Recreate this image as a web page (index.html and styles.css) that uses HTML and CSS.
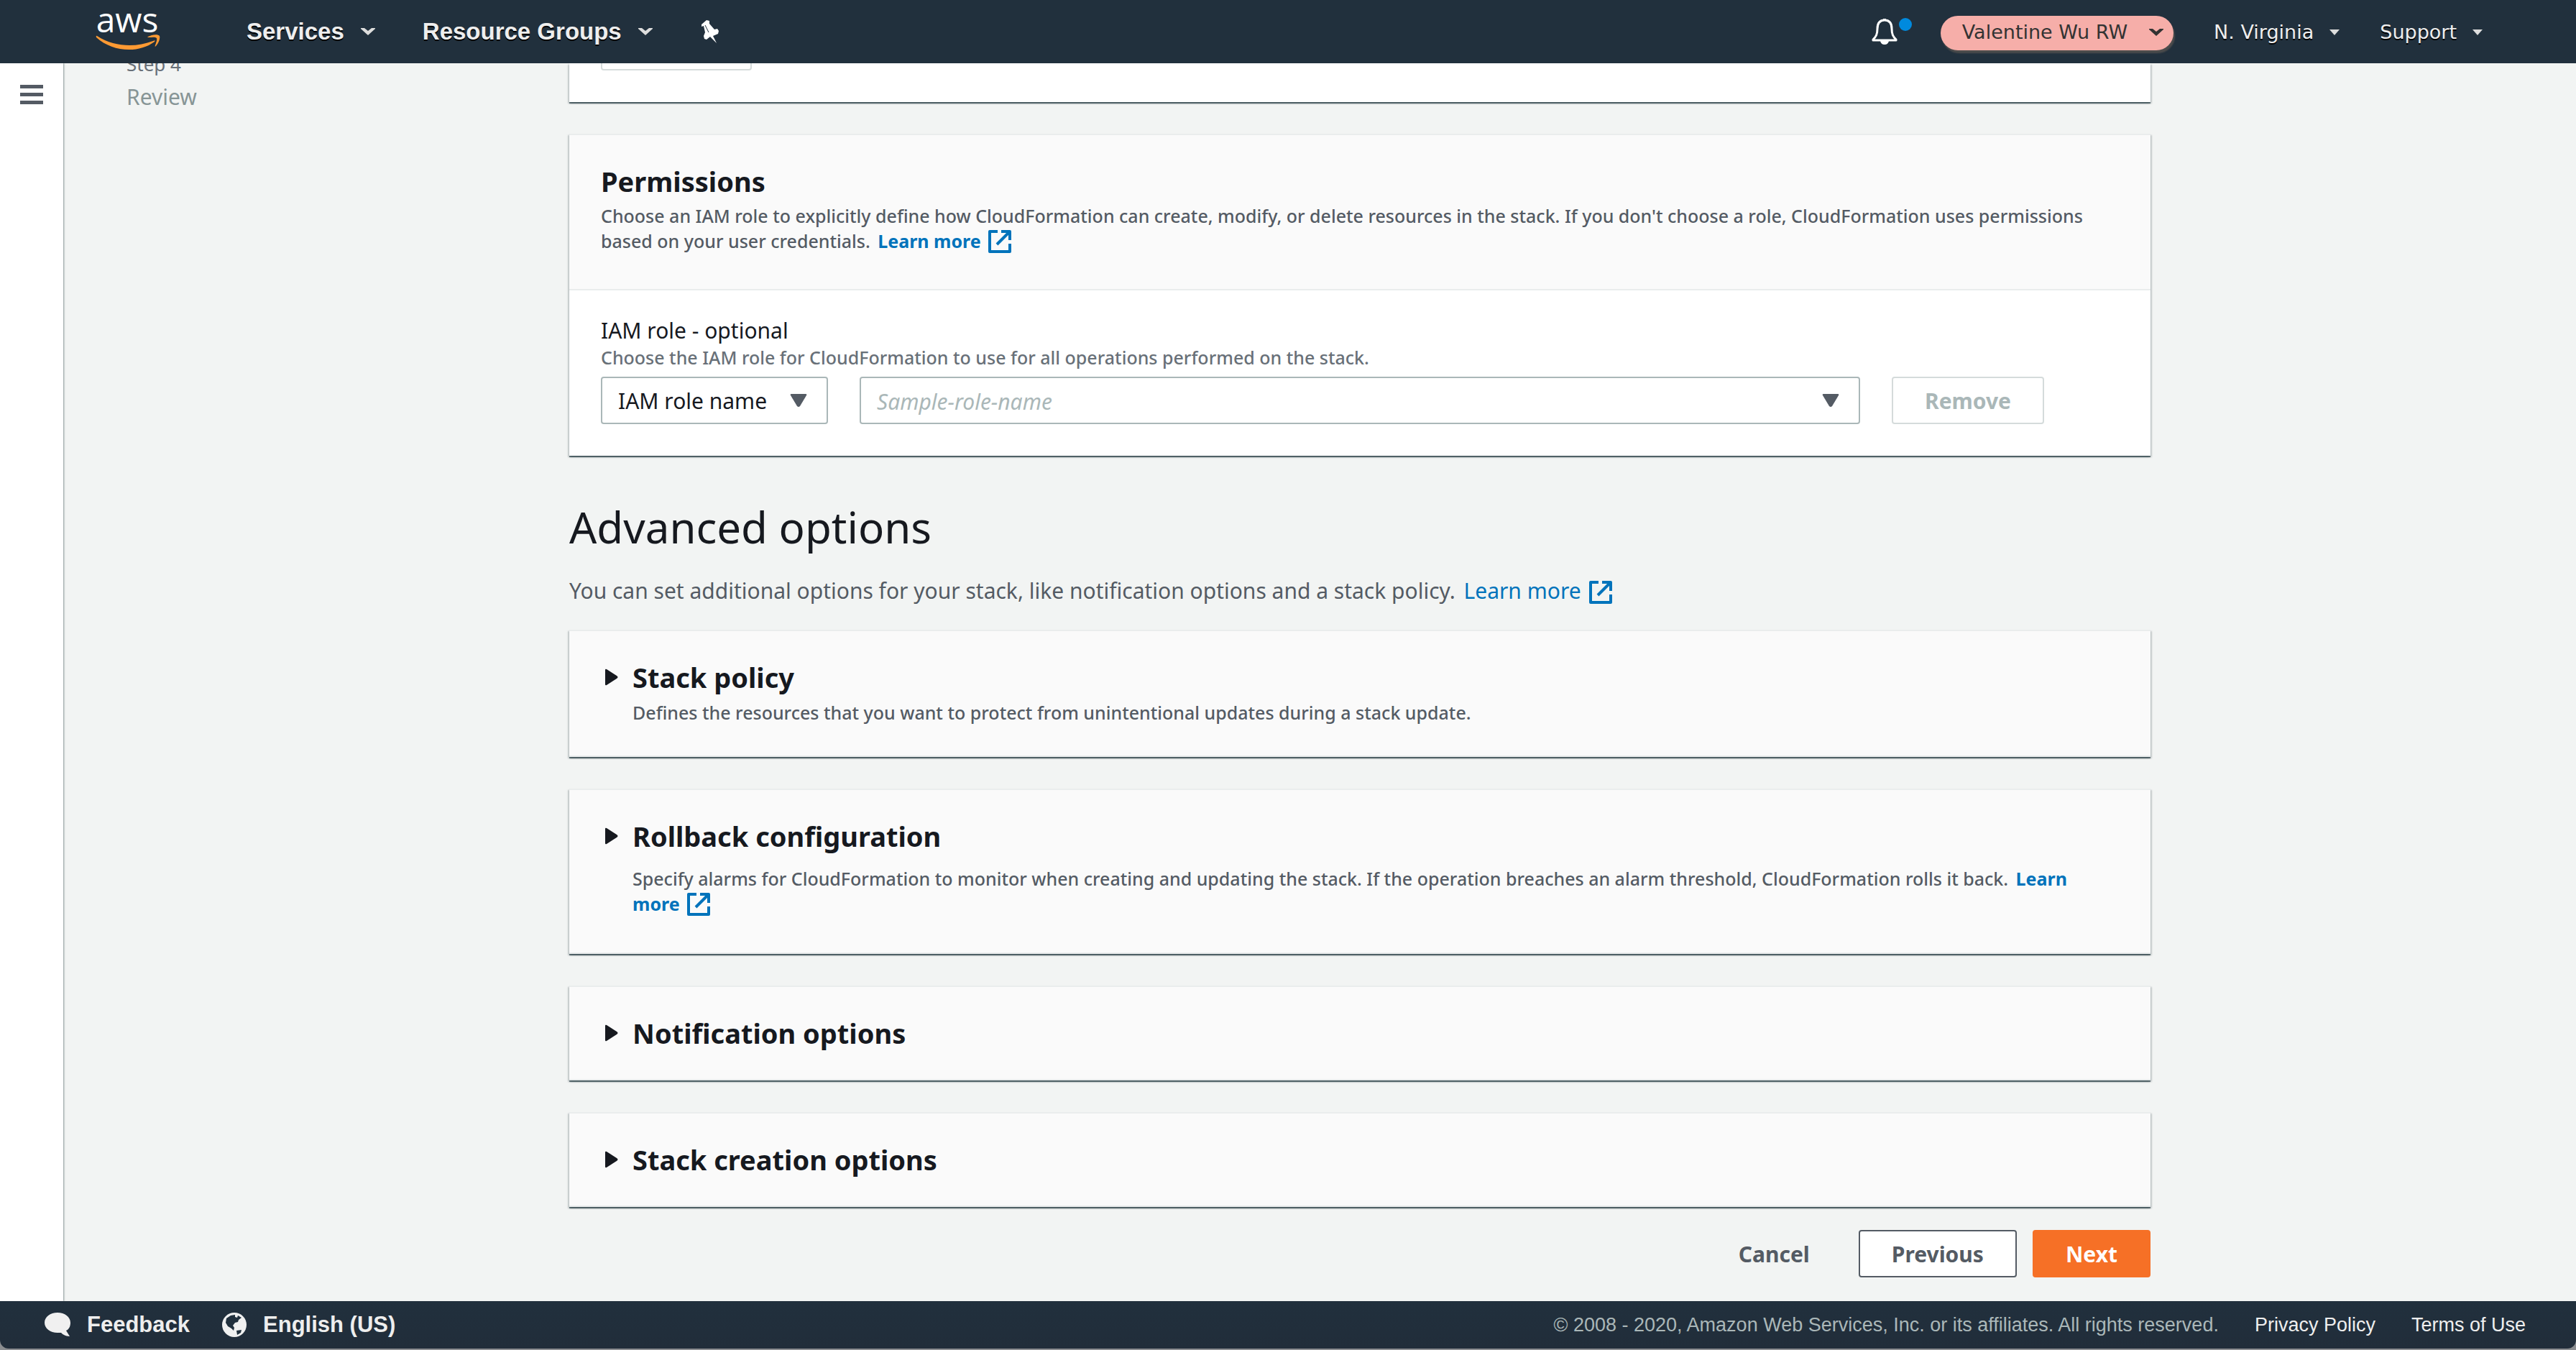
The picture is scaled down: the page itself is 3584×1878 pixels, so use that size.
FILE: index.html
```
<!DOCTYPE html>
<html lang="en">
<head>
<meta charset="utf-8">
<title>CloudFormation - Configure stack options</title>
<link rel="stylesheet" href="styles.css">
</head>
<body>
<svg class="sprite" aria-hidden="true">
  <symbol id="chevron" viewBox="0 0 20 10"><path d="M0 0h5l5 4 5-4h5v1L10 10 0 1z"/></symbol>
  <symbol id="caret" viewBox="0 0 14 8"><path d="M0 0h14L7 8z"/></symbol>
  <symbol id="down" viewBox="0 0 24 18"><path d="M2 0h20q2 0 1 2l-9 15q-2 2-4 0L1 2q-1-2 1-2z"/></symbol>
  <symbol id="right" viewBox="0 0 18 24"><path d="M0 2q0-2 2-1l14 9q3 2 0 4L2 23q-2 1-2-1z"/></symbol>
  <symbol id="external" viewBox="0 0 32 32"><path d="M13 2H2v28h28V19M18 2h12v12M29 3L12 20" fill="none" stroke="currentColor" stroke-width="4" stroke-linejoin="round"/></symbol>
</svg>

<header class="topbar">
  <a class="logo" href="#" aria-label="AWS home">
    <svg width="88" height="60" viewBox="0 0 88 60">
      <text x="43" y="35" text-anchor="middle" class="logo-text">aws</text>
      <path class="smile" d="M1 40C26 56 55 56 79 47q4-2 2 1C58 65 22 62 0 42q-1-3 1-2zM72 41c5-3 14-4 16-1 1 3-1 10-5 14-1 1-2 1-1-1 1-3 3-8 2-10-2-2-7-1-11-1q-3 0-1-1z"/>
    </svg>
  </a>
  <nav class="main-nav">
    <button class="nav-item">Services <svg width="20" height="10"><use href="#chevron"/></svg></button>
    <button class="nav-item">Resource Groups <svg width="20" height="10"><use href="#chevron"/></svg></button>
    <button class="nav-item" aria-label="Pin shortcuts"><svg class="pin" width="26" height="32" viewBox="0 0 26 32"><path d="M2 6L9 0l4 1v4l7 8 4-1 2 3-1 4-7 3 5 10-9-9-5 4-3-1-1-4 2-5L5 8 2 9z"/><path d="M7 7l5 10" stroke="#21303d" stroke-width="1" fill="none"/></svg></button>
  </nav>
  <nav class="user-nav">
    <button class="bell" aria-label="Notifications">
      <svg width="36" height="38" viewBox="0 0 36 38"><path d="M18 3C11 3 8 8 8 15c0 8-2 11-6 15v1h32v-1c-4-4-6-7-6-15C28 8 25 3 18 3z" fill="none" stroke="#fff" stroke-width="3" stroke-linejoin="round"/><path d="M16 1h4v3h-4zM12 32h12q-1 5-6 5t-6-5z" fill="#fff"/></svg>
      <span class="dot"></span>
    </button>
    <button class="account">Valentine Wu RW <svg width="20" height="10"><use href="#chevron"/></svg></button>
    <button class="region">N. Virginia <svg width="14" height="8"><use href="#caret"/></svg></button>
    <button class="region">Support <svg width="14" height="8"><use href="#caret"/></svg></button>
  </nav>
</header>

<div class="shell">
  <aside class="rail">
    <button class="menu" aria-label="Open menu"><span></span><span></span><span></span></button>
  </aside>
  <aside class="steps">
    <div class="step-label">Step 4</div>
    <div class="step-name">Review</div>
  </aside>
  <main class="content">
    <section class="card tags">
      <button class="btn disabled stub" aria-label="Add tag" disabled></button>
    </section>

    <section class="card">
      <div class="card-head">
        <h2>Permissions</h2>
        <p class="small">Choose an IAM role to explicitly define how CloudFormation can create, modify, or delete resources in the stack. If you don't choose a role, CloudFormation uses permissions based on your user credentials. <a class="more" href="#">Learn <span class="keep">more <svg class="ext"><use href="#external"/></svg></span></a></p>
      </div>
      <div class="card-body">
        <label class="field-label" for="role-name">IAM role - optional</label>
        <p class="small hint">Choose the IAM role for CloudFormation to use for all operations performed on the stack.</p>
        <div class="role-row">
          <div class="control">
            <select aria-label="IAM role identifier"><option>IAM role name</option></select>
            <svg width="24" height="18"><use href="#down"/></svg>
          </div>
          <div class="control">
            <input id="role-name" type="text" placeholder="Sample-role-name">
            <svg width="24" height="18"><use href="#down"/></svg>
          </div>
          <div><button class="btn disabled" disabled>Remove</button></div>
        </div>
      </div>
    </section>

    <h1>Advanced options</h1>
    <p class="intro">You can set additional options for your stack, like notification options and a stack policy. <a class="more" href="#">Learn <span class="keep">more <svg class="ext"><use href="#external"/></svg></span></a></p>

    <section class="card expander">
      <h2><button><svg width="18" height="24"><use href="#right"/></svg>Stack policy</button></h2>
      <p class="small">Defines the resources that you want to protect from unintentional updates during a stack update.</p>
    </section>
    <section class="card expander roomy">
      <h2><button><svg width="18" height="24"><use href="#right"/></svg>Rollback configuration</button></h2>
      <p class="small">Specify alarms for CloudFormation to monitor when creating and updating the stack. If the operation breaches an alarm threshold, CloudFormation rolls it back. <a class="more" href="#">Learn <span class="keep">more <svg class="ext"><use href="#external"/></svg></span></a></p>
    </section>
    <section class="card expander">
      <h2><button><svg width="18" height="24"><use href="#right"/></svg>Notification options</button></h2>
    </section>
    <section class="card expander">
      <h2><button><svg width="18" height="24"><use href="#right"/></svg>Stack creation options</button></h2>
    </section>

    <div class="actions">
      <button class="btn link">Cancel</button>
      <button class="btn">Previous</button>
      <button class="btn primary">Next</button>
    </div>
  </main>
</div>

<footer class="footer">
  <div class="footer-bar">
    <a class="foot-item" href="#"><svg width="36" height="34" viewBox="0 0 36 34"><path d="M18 0c10 0 18 6 18 14 0 5-2 9-6 11l5 8c-6 0-10-3-12-5l-5 0C8 28 0 22 0 14S8 0 18 0z" fill="#f0f0f0"/></svg>Feedback</a>
    <button class="foot-item"><svg width="34" height="34" viewBox="0 0 34 34"><circle cx="17" cy="17" r="17" fill="#f0f0f0"/><path d="M6 8l6-4 6-1 0 3 3 1 1-3 5 3-4 3-1 3-4 1-3 4 2 3-1 4-3-3-5-3-3-5zM20 25l7-1-1 4-5 3z" fill="#21303d"/></svg>English (US)</button>
    <span class="legal">© 2008 - 2020, Amazon Web Services, Inc. or its affiliates. All rights reserved.</span>
    <a href="#">Privacy Policy</a>
    <a href="#">Terms of Use</a>
  </div>
</footer>
</body>
</html>
```
FILE: styles.css
```
* { box-sizing: border-box; }

body {
  margin: 0;
  height: 100vh;
  display: flex;
  flex-direction: column;
  background: #f2f4f3;
  color: #16191f;
  font: 30px/40px "Noto Sans", "Open Sans", sans-serif;
  overflow: hidden;
}

h1, h2, p { margin: 0; }
button {
  margin: 0;
  padding: 0;
  border: 0;
  background: none;
  color: inherit;
  font: inherit;
  cursor: pointer;
}
a { color: inherit; text-decoration: none; }
svg { fill: currentColor; flex: none; }
.sprite { position: absolute; width: 0; height: 0; }

/* Top bar */
.topbar {
  flex: none;
  height: 88px;
  padding: 0 130px 0 134px;
  display: flex;
  align-items: center;
  background: #21303d;
  color: #eee;
}
.logo { height: 68px; }
.logo svg { overflow: visible; }
.logo-text { font: 48px "Open Sans", sans-serif; fill: #fff; }
.smile { fill: #ff9a33; }
.main-nav, .user-nav { display: flex; align-items: center; }
.main-nav { margin-left: 121px; gap: 66px; }
.nav-item {
  display: flex;
  align-items: center;
  gap: 23px;
  font: bold 33px/40px "Liberation Sans", Arial, sans-serif;
  text-shadow: 0 2px 0 #000;
}
.user-nav {
  margin-left: auto;
  gap: 56px;
  font: 27px/40px "DejaVu Sans", Verdana, sans-serif;
}
.bell { position: relative; width: 56px; height: 38px; text-align: left; }
.bell svg { display: block; }
.dot {
  position: absolute;
  top: 0;
  right: 0;
  width: 18px;
  height: 18px;
  border-radius: 50%;
  background: #008ade;
}
.account {
  display: flex;
  align-items: center;
  gap: 30px;
  height: 48px;
  margin: 4px 0 0 -16px;
  padding: 0 14px 2px 30px;
  border-radius: 24px;
  background: #f6aea9;
  color: #333;
  box-shadow: 2px 4px 2px #4c4c4c;
}
.region {
  display: flex;
  align-items: center;
  gap: 22px;
  margin-top: 2px;
  text-shadow: 0 2px 0 #000;
}
.region svg, .nav-item svg { color: #ddd; }
.nav-item .pin { color: #fff; }

/* Page */
.shell {
  flex: 1;
  min-height: 0;
  display: grid;
  grid-template-columns: 88px 704px minmax(0, 2200px);
  overflow: hidden;
}
.rail { background: #fff; box-shadow: 1px 0 2px #879596; padding: 30px 28px; }
.menu { display: flex; flex-direction: column; gap: 6px; width: 32px; }
.menu span { height: 5px; background: #545b64; }
.steps { padding-left: 88px; color: #687078; }
.step-label { font-size: 26px; line-height: 35px; margin-top: -16px; }
.step-name { line-height: 40px; margin-top: 8px; color: #879596; }

.card {
  margin-bottom: 44px;
  border-top: 2px solid #eaeded;
  background: #fff;
  box-shadow: 0 2px 2px #001c244d, 2px 2px 2px #001c2426, -2px 2px 2px #001c2426, 0 2px 0 #879596;
}
.card h2 { font-size: 38px; line-height: 44px; }
.small { font-size: 25px; line-height: 35px; font-weight: 500; color: #545b64; }
.card-head { padding: 42px 44px 49px; border-bottom: 2px solid #eaeded; background: #fafafa; }
.card-head .small { margin-top: 9px; }
.card-body { padding: 36px 44px 44px; }
.tags { display: flex; align-items: flex-start; border: 0; height: 54px; padding: 0 44px; }
.stub { width: 210px; margin-top: -56px; }

.more { margin-left: 4px; color: #0073bb; }
.small .more { font-weight: 700; }
.keep { white-space: nowrap; }
.ext { width: 32px; height: 32px; margin-left: 4px; vertical-align: -7px; }

.field-label { display: block; }
.hint { color: #687078; }
.role-row {
  display: grid;
  grid-template-columns: 316px 1fr 316px;
  gap: 44px;
  margin-top: 9px;
}
.control { display: grid; align-items: center; }
.control > * { grid-area: 1 / 1; }
.control svg { justify-self: end; margin-right: 29px; color: #545b64; pointer-events: none; }
.control select, .control input {
  width: 100%;
  height: 66px;
  padding: 2px 22px 0;
  border: 2px solid #aab7b8;
  border-radius: 4px;
  appearance: none;
  background: #fff;
  color: #16191f;
  font: inherit;
}
.control input::placeholder { color: #aab7b8; font-style: italic; opacity: 1; }

.btn {
  height: 66px;
  padding: 2px 44px 0;
  border: 2px solid #545b64;
  border-radius: 4px;
  background: #fff;
  color: #545b64;
  font-weight: 700;
}
.btn.disabled { border-color: #d5dbdb; color: #aab7b8; }
.btn.primary { border-color: #f67026; background: #f67026; color: #fff; }
.btn.link { border-color: transparent; background: none; }

h1 { margin-top: 64px; font-size: 60px; line-height: 70px; font-weight: 400; }
.intro { margin: 34px 0; color: #545b64; }

.expander {
  padding: 42px 44px 42px 88px;
  border-bottom: 2px solid #eaeded;
  background: #fafafa;
}
.expander h2 button { display: flex; align-items: center; margin-left: -38px; gap: 20px; }
.expander .small { margin-top: 10px; }
.roomy { padding-bottom: 50px; }
.roomy .small { margin-top: 20px; }

.actions { display: flex; justify-content: flex-end; gap: 22px; margin-top: -12px; }

/* Footer */
.footer { flex: none; background: #8b8d90; }
.footer-bar {
  display: flex;
  align-items: center;
  height: 66px;
  margin-bottom: 2px;
  padding: 0 70px 0 62px;
  border-radius: 0 0 12px 12px;
  background: linear-gradient(#21303d, #212d3a);
  color: #eee;
  font: 27px/40px "Liberation Sans", Arial, sans-serif;
}
.footer-bar .legal ~ a { margin-left: 50px; }
.foot-item {
  display: flex;
  align-items: center;
  gap: 23px;
  margin-right: 45px;
  font-size: 31px;
  font-weight: 700;
}
.legal { margin-left: auto; color: #aab7b8; }
```
